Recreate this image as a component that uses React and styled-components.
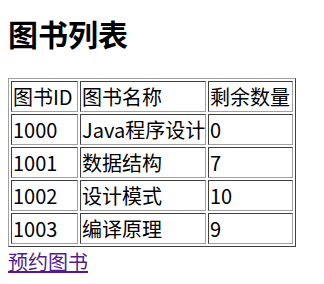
import React from "react";
import styled, { createGlobalStyle } from "styled-components";

const Global = createGlobalStyle`
  html, body { margin: 0; padding: 0; background: #fff; }
  body {
    font-family: "Noto Sans CJK SC", "Microsoft YaHei", sans-serif;
    font-size: 20px;
    color: #000;
  }
`;

const Page = styled.div`
  padding: 8px;
`;

const Title = styled.h1`
  margin: 7px 0 27px;
  font-size: 30px;
  line-height: 36px;
  font-weight: bold;
`;

const Table = styled.table`
  table-layout: fixed;
  border-collapse: separate;
  border-spacing: 2px;
  border: 1px solid;
  border-color: #a0a0a0 #404040 #404040 #a0a0a0;
  width: 288px;
`;

const Cell = styled.td`
  box-sizing: border-box;
  width: ${(p) => p.$w}px;
  height: 31px;
  padding: 1px;
  border: 1px solid;
  border-color: #404040 #a0a0a0 #a0a0a0 #404040;
  text-align: left;
  vertical-align: middle;
  line-height: 27px;
  white-space: nowrap;
  overflow: visible;
  font-weight: normal;
`;

const Link = styled.a`
  display: inline-block;
  line-height: 27px;
  color: #551a8b;
  text-decoration: underline;
`;

const widths = [67, 126, 85];
const rows = [
  ["图书ID", "图书名称", "剩余数量"],
  ["1000", "Java程序设计", "0"],
  ["1001", "数据结构", "7"],
  ["1002", "设计模式", "10"],
  ["1003", "编译原理", "9"],
];

export default function App() {
  return (
    <>
      <Global />
      <Page>
        <Title>图书列表</Title>
        <Table>
          <tbody>
            {rows.map((r, i) => (
              <tr key={i}>
                {r.map((c, j) => (
                  <Cell key={j} $w={widths[j]}>
                    {c}
                  </Cell>
                ))}
              </tr>
            ))}
          </tbody>
        </Table>
        <Link href="#">预约图书</Link>
      </Page>
    </>
  );
}
